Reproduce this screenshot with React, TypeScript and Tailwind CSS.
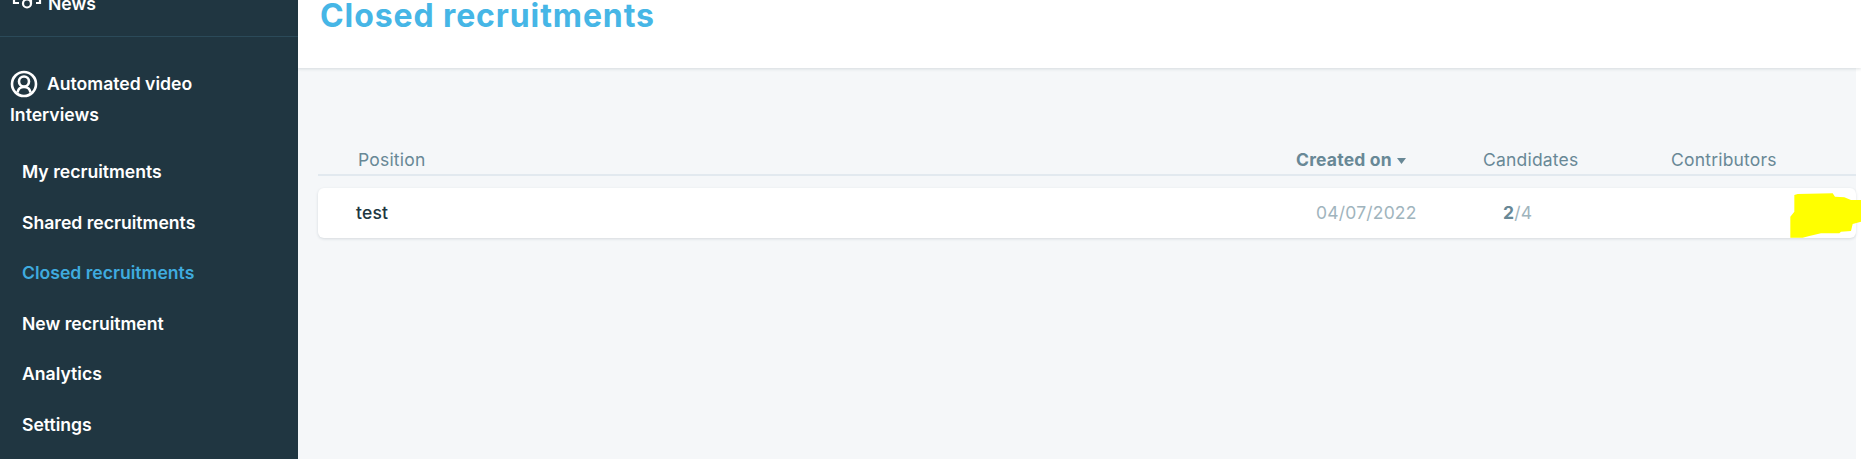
const menu = ["My recruitments", "Shared recruitments", "Closed recruitments", "New recruitment", "Analytics", "Settings"];

function NewsIcon() {
  return (
    <svg width="30" height="14" viewBox="0 0 30 14" fill="none" stroke="white" strokeWidth="2.2">
      <path d="M2 0v6h5M28 0v6h-4" />
      <circle cx="15" cy="6.500" r="4" />
      <path d="M19 6.500V0" />
    </svg>
  );
}

function VideoIcon() {
  return (
    <svg width="28" height="28" viewBox="0 0 28 28" fill="none" stroke="white" strokeWidth="2.6">
      <circle cx="14" cy="14" r="12" />
      <circle cx="14" cy="11.500" r="5" />
      <path d="M7.500 22.500c.5-3.500 3-5.500 6.500-5.500s6 2 6.500 5.500" />
    </svg>
  );
}

export default function App() {
  return (
    <div className="flex h-[459px] overflow-hidden bg-white font-['Inter',sans-serif]">
      <aside className="w-[298px] shrink-0 bg-[#203641] text-[17.6px] font-semibold text-white">
        <div className="-mt-[6px] flex h-[43px] items-start gap-[6px] border-b border-[#2b4a59] pl-[12px]">
          <div className="pt-[3px]">
            <NewsIcon />
          </div>
          <span className="leading-[20px]">News</span>
        </div>
        <div className="mt-[33px] flex items-center gap-[9px] pl-[10px]">
          <VideoIcon />
          <span className="leading-[26px]">Automated video</span>
        </div>
        <div className="mt-[5px] pl-[10px] leading-[24px]">Interviews</div>
        <nav className="mt-[33px] flex flex-col gap-[26.5px] pl-[22px]">
          {menu.map((item) => (
            <a key={item} className={item === "Closed recruitments" ? "leading-[24px] text-[#3fabdf]" : "leading-[24px]"}>
              {item}
            </a>
          ))}
        </nav>
      </aside>
      <main className="mr-[5px] flex-1 bg-[#f5f7f9]">
        <header className="-mr-[5px] h-[68px] bg-white pl-[22px] shadow-[0_1px_3px_rgba(32,54,65,0.15)]">
          <h1 className="text-[32px] leading-[32px] font-bold tracking-[0.9px] text-[#46b6e6]">Closed recruitments</h1>
        </header>
        <div className="ml-[20px] mt-[79px]">
          <div className="flex h-[29px] items-center border-b-2 border-[#e2e9ef] text-[17.5px] tracking-[0.2px] text-[#688896]">
            <span className="flex-1 pl-[40px]">Position</span>
            <span className="flex w-[187px] items-center gap-[5px] font-bold">
              Created on
              <svg width="9" height="6" viewBox="0 0 9 6" fill="#688896">
                <path d="M0 0h9L4.500 6z" />
              </svg>
            </span>
            <span className="w-[188px]">Candidates</span>
            <span className="w-[185px]">Contributors</span>
          </div>
          <div className="relative mt-[12px] flex h-[50px] items-center rounded-[6px] bg-white text-[17.5px] tracking-[0.2px] shadow-[0_1px_3px_rgba(32,54,65,0.15)]">
            <span className="flex-1 pl-[38px] font-medium text-[#203641]">test</span>
            <span className="w-[187px] text-[#a0b4bd]">04/07/2022</span>
            <span className="w-[353px] text-[#a0b4bd]">
              <b className="text-[#688896]">2</b>/4
            </span>
            <svg className="absolute -right-[5px] -top-[38px]" width="100" height="100" viewBox="0 0 300 300" fill="#ffff00">
              <path d="M100 135l10-3 105-2 7 10 28 2 20 8h30v65l-25 7-5 21-30 2-5 5h-55l-35 8-20 5H88v-63l12-15z" />
            </svg>
          </div>
        </div>
      </main>
    </div>
  );
}
